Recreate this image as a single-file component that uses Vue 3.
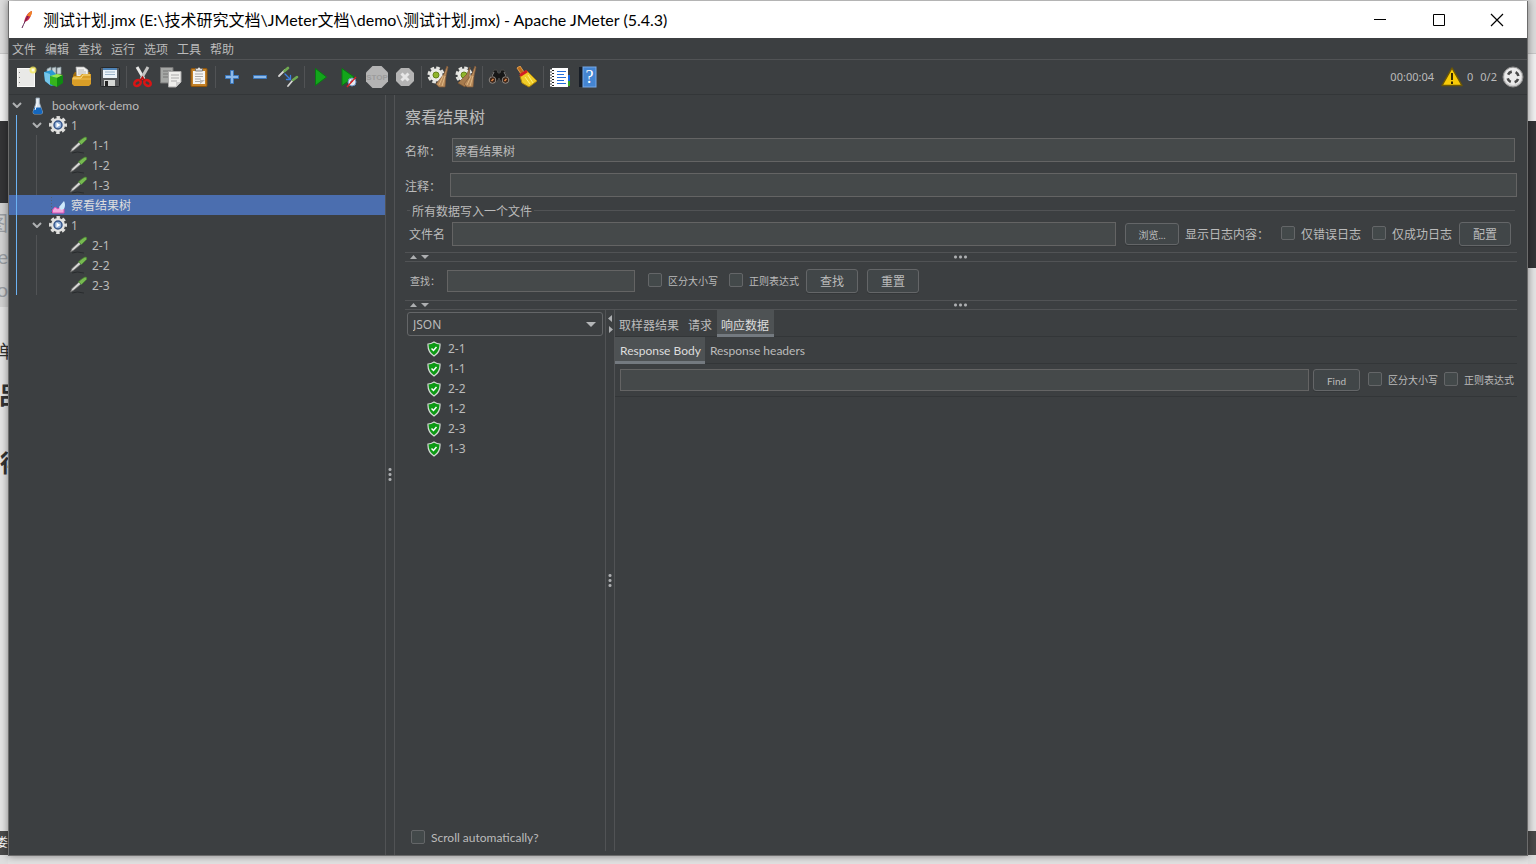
<script setup>
import { ref } from 'vue'

const title = '测试计划.jmx (E:\\技术研究文档\\JMeter文档\\demo\\测试计划.jmx) - Apache JMeter (5.4.3)'
const menus = ['文件', '编辑', '查找', '运行', '选项', '工具', '帮助']
const toolGroups = [
  ['new', 'templates', 'open', 'save'],
  ['cut', 'copy', 'paste'],
  ['plus', 'minus', 'toggle'],
  ['start', 'startnp', 'stop', 'shutdown'],
  ['clear', 'clearall'],
  ['search', 'broom'],
  ['functions', 'help'],
]
const treeGroups = [
  { name: '1', children: ['1-1', '1-2', '1-3'] },
  { name: '1', children: ['2-1', '2-2', '2-3'] },
]
const results = ['2-1', '1-1', '2-2', '1-2', '2-3', '1-3']
const elementName = ref('察看结果树')
const renderer = ref('JSON')
</script>

<template>
  <div class="desktop">
    <div class="behind behind-left" aria-hidden="true">
      <div class="band band-top"></div>
      <div class="band band-white"></div>
      <div class="band band-dark"></div>
      <div class="band band-list">
        <span class="peek grey p1">图</span>
        <span class="peek grey p2">ge</span>
        <span class="peek grey p3">o</span>
      </div>
      <div class="band band-page">
        <span class="peek p4">单</span>
        <span class="peek bold p5">吕</span>
        <span class="peek bold p6">得</span>
      </div>
      <div class="band band-task"><span class="peek p7">娄</span></div>
    </div>
    <div class="behind behind-right" aria-hidden="true">
      <div class="band band-top"></div>
      <div class="band band-white"></div>
      <div class="band band-dark tall"></div>
      <div class="band band-page"></div>
      <div class="band band-task"></div>
    </div>

    <main class="window">
      <header class="titlebar">
        <svg class="feather" viewBox="0 0 16 22" width="16" height="22">
          <path d="M13 2C9 3 6 8 5 13L8 12C11 10 12.500 6 13 2Z" fill="#c9234a" />
          <path d="M13 2C10.500 2.500 9 4.500 8 7L11.500 7.500C12.500 5.500 13 4 13 2Z" fill="#f08324" />
          <path d="M9 7C7 11 5 14 3 19" fill="none" stroke="#5c2150" stroke-width="1" />
        </svg>
        <h1>{{ title }}</h1>
        <div class="caption-buttons">
          <button aria-label="Minimize"><svg width="14" height="14" viewBox="0 0 14 14"><path d="M1 6.500H13" stroke="#000" /></svg></button>
          <button aria-label="Maximize"><svg width="14" height="14" viewBox="0 0 14 14"><path d="M1.500 1.500H12.500V12.500H1.500Z" fill="none" stroke="#000" /></svg></button>
          <button aria-label="Close"><svg width="14" height="14" viewBox="0 0 14 14"><path d="M1 1L13 13M13 1L1 13" stroke="#000" stroke-width="1.200" /></svg></button>
        </div>
      </header>

      <nav class="menubar">
        <button v-for="m in menus" :key="m">{{ m }}</button>
      </nav>

      <div class="toolbar">
        <div v-for="(group, gi) in toolGroups" :key="gi" class="tool-group">
          <button v-for="t in group" :key="t" :aria-label="t">
            <svg viewBox="0 0 22 22" width="22" height="22">
              <g v-if="t === 'new'">
                <rect x="2.500" y="2.500" width="17" height="18" fill="#e9e9e7" stroke="#fafaf8" />
                <path d="M4.500 6v1M4.500 11v1M4.500 16v1" stroke="#888" />
                <circle cx="18" cy="4" r="3.500" fill="#f4e95e" opacity=".8" />
                <circle cx="18" cy="4" r="1.500" fill="#fffde0" />
              </g>
              <g v-else-if="t === 'templates'">
                <path d="M4 3L8 1V8H4ZM9 2L13 1V8H9ZM14 2L18 1V8H14Z" fill="#c8d2d6" stroke="#7e9098" stroke-width=".7" />
                <path d="M1 6L9 4L13 8V19L8 20L2 15Z" fill="#2b9ad2" />
                <path d="M1 6L7 8V19L2 15Z" fill="#75c6ea" />
                <path d="M7 10L14 8L20 9L14 12Z" fill="#96e84c" />
                <path d="M7 10L14 12V21L7 18Z" fill="#36b51c" />
                <path d="M14 12L20 9V17L14 21Z" fill="#0f8911" />
              </g>
              <g v-else-if="t === 'open'">
                <path d="M2 9L4 6H19V19H2Z" fill="#9d6b0e" />
                <path d="M5 1H13L17 4V13H6Z" fill="#f2f2f0" stroke="#aaa" stroke-width=".7" />
                <path d="M7 4H13M7 6H15M7 8H15" stroke="#aaa" stroke-width=".8" />
                <path d="M1 12L3 10H9L11 8H20V18L18 20H3L1 18Z" fill="#d99e27" />
                <path d="M1.500 12.500H20V13.500H1.500Z" fill="#eebf55" />
                <path d="M2 12H10L12 9H19" fill="none" stroke="#fce087" />
              </g>
              <g v-else-if="t === 'save'">
                <rect x="1.500" y="1.500" width="19" height="19" rx="1" fill="#56585a" stroke="#27292b" />
                <rect x="4" y="2" width="14" height="10" fill="#edf3f8" />
                <path d="M4 3H18" stroke="#4e83b6" stroke-width="2" />
                <path d="M6 6H16M6 8.500H16" stroke="#9cb4c8" />
                <rect x="5" y="14" width="11" height="6" fill="#d5d7d5" />
                <rect x="6" y="15" width="3" height="5" fill="#222" />
              </g>
              <g v-else-if="t === 'cut'">
                <path d="M5 1L12 13" stroke="#e7e7e5" stroke-width="3" />
                <path d="M16 1L9 13" stroke="#c4c4c2" stroke-width="3" />
                <ellipse cx="5.500" cy="17" rx="3.500" ry="2.600" transform="rotate(-35 5.500 17)" fill="none" stroke="#d91515" stroke-width="2.500" />
                <ellipse cx="15.500" cy="17" rx="3.500" ry="2.600" transform="rotate(35 15.500 17)" fill="none" stroke="#d91515" stroke-width="2.500" />
                <path d="M8.500 14.500L10.500 11.500L12.500 14.500" fill="none" stroke="#ba1010" stroke-width="2" />
              </g>
              <g v-else-if="t === 'copy'">
                <path d="M.5 1.500H13V17H.5Z" fill="#a5a7a5" stroke="#777" />
                <path d="M3 5H11M3 8H11M3 11H11" stroke="#777" />
                <path d="M8.500 5.500H21V16L16 21H8.500Z" fill="#eeeeec" stroke="#aaa" />
                <path d="M11 9H19M11 12H19M11 15H17" stroke="#aaa" />
                <path d="M16 21V16H21Z" fill="#ccc" />
              </g>
              <g v-else-if="t === 'paste'">
                <rect x="3" y="2.500" width="16" height="18" rx="1" fill="#c38127" stroke="#8e540b" />
                <rect x="5" y="5" width="12" height="13" fill="#f5f5f3" />
                <path d="M7.500 5V2.500H9.500L11 1L12.500 2.500H14.500V5Z" fill="#ddd" stroke="#666" stroke-width=".8" />
                <path d="M7 8H15M7 10.500H15M7 13H13M7 15.500H12" stroke="#aaa" />
                <path d="M12 18V14H17Z" fill="#bbb" />
              </g>
              <path v-else-if="t === 'plus'" d="M9.500 4.500H12.500V9.500H17.500V12.500H12.500V17.500H9.500V12.500H4.500V9.500H9.500Z" fill="#8db9e8" stroke="#3b78bd" />
              <path v-else-if="t === 'minus'" d="M4.500 9.500H17.500V12.500H4.500Z" fill="#8db9e8" stroke="#3b78bd" />
              <g v-else-if="t === 'toggle'" stroke-linecap="round">
                <path d="M2 10L8 4M11 20L16 14" stroke="#d6d6d4" stroke-width="1.800" />
                <path d="M7.500 5L11 2M16 14L20 11" stroke="#70a951" stroke-width="2.600" />
                <path d="M8 8L13 13M13.500 9.500V13.500H9.500" stroke="#3d7fe0" stroke-width="1.300" fill="none" />
              </g>
              <path v-else-if="t === 'start'" d="M5.500 2.500L16.500 11L5.500 19.500Z" fill="#13a51b" stroke="#087a12" />
              <g v-else-if="t === 'startnp'">
                <path d="M4 2.500L16 11L4 19.500Z" fill="#13a51b" stroke="#087a12" />
                <circle cx="14" cy="16" r="4" fill="#e3e9f2" stroke="#6d91c0" />
                <path d="M14 13.500V16H12" stroke="#456" fill="none" />
                <path d="M9 21L18 11" stroke="#dd2222" stroke-width="1.300" />
              </g>
              <g v-else-if="t === 'stop'">
                <path d="M6.500 0H15.500L22 6.500V15.500L15.500 22H6.500L0 15.500V6.500Z" fill="#b4b4b4" />
                <text x="11" y="14" text-anchor="middle" class="stop-word">STOP</text>
              </g>
              <g v-else-if="t === 'shutdown'">
                <path d="M7 2H15L20 7V15L15 20H7L2 15V7Z" fill="#b4b4b4" />
                <path d="M7.500 7.500L14.500 14.500M14.500 7.500L7.500 14.500" stroke="#e6e6e6" stroke-width="3" />
              </g>
              <g v-else-if="t === 'clear' || t === 'clearall'">
                <circle cx="9" cy="9" r="6.500" fill="#ecece8" />
                <circle cx="9" cy="9" r="7.300" fill="none" stroke="#e3e3df" stroke-width="2.500" stroke-dasharray="3.700 2.030" />
                <circle cx="9" cy="9" r="3" fill="#90b52b" stroke="#64821b" />
                <path v-if="t === 'clearall'" d="M15 1L12 8L3 17L10 21L14 12Z" fill="#a77b4d" stroke="#7c5632" stroke-width=".7" />
                <path d="M20 0L17 8L9 18L12 21H18L19 10L21 1Z" fill="#b88b5b" stroke="#80593a" stroke-width=".7" />
                <path d="M16 10L12 19M18 10L15 20" stroke="#e1b985" stroke-width="1" />
              </g>
              <g v-else-if="t === 'search'">
                <path d="M6 4H9L10 7H12L13 4H16L19 9L21 14L13 16L11 12L9 16L1 14L3 9Z" fill="#171717" stroke="#4b4b49" />
                <path d="M6 6L4 10M16 6L18 10" stroke="#888" />
                <circle cx="4.500" cy="14" r="3.300" fill="#3c2417" stroke="#8f8a85" />
                <circle cx="17.500" cy="14" r="3.300" fill="#3c2417" stroke="#8f8a85" />
                <path d="M3.500 15L5.500 13M16.500 15L18.500 13" stroke="#de8648" stroke-width="1.500" />
              </g>
              <g v-else-if="t === 'broom'">
                <path d="M1 2L4 0L8 6L5 8Z" fill="#b86d1c" stroke="#df9b4d" />
                <path d="M4 10L11 5L21 15L13 21L6 17Z" fill="#f0cc27" stroke="#ae8409" />
                <path d="M9 11L14 18M12 9L17 17" stroke="#fff078" />
                <path d="M4 9.500L11 5" stroke="#d31e23" stroke-width="3" />
              </g>
              <g v-else-if="t === 'functions'">
                <path d="M18 9H21V15H18Z" fill="#1768e0" /><path d="M18 15H21V20H18Z" fill="#35a821" />
                <rect x="3" y="2" width="16" height="19" fill="#fff" />
                <path d="M8 5.500H17M8 8.500H15M8 11.500H17M8 14.500H15M8 17.500H17" stroke="#236edb" />
                <path d="M1 4.500H5M1 7.500H5M1 10.500H5M1 13.500H5M1 16.500H5M1 19.500H5" stroke="#fff" stroke-width="2" />
                <path d="M3 4.500H5M3 7.500H5M3 10.500H5M3 13.500H5M3 16.500H5M3 19.500H5" stroke="#222" />
              </g>
              <g v-else>
                <rect x="2" y="1" width="4" height="20" fill="#171d26" />
                <rect x="6" y="1" width="13" height="20" fill="#4485d2" stroke="#77a9e8" />
                <text x="12.500" y="17" text-anchor="middle" class="help-mark">?</text>
              </g>
            </svg>
          </button>
        </div>
        <div class="status">
          <span class="time">00:00:04</span>
          <svg class="warn" width="22" height="20" viewBox="0 0 22 20"><path d="M11 1L21 18.500H1Z" fill="#f8cb08" stroke="#6d5704" stroke-width="1.500" stroke-linejoin="round" /><path d="M11 6V13M11 14.500V17" stroke="#332900" stroke-width="2" /></svg>
          <span class="errors">0</span>
          <span class="threads">0/2</span>
          <svg width="22" height="22" viewBox="0 0 22 22"><circle cx="11" cy="11" r="10" fill="#cfcfcf" stroke="#8c8c8c" /><circle cx="11" cy="10.500" r="8.500" fill="#ececec" /><circle cx="11" cy="11" r="5.500" fill="none" stroke="#4a4a4a" stroke-width="2.600" stroke-dasharray="4.600 4.040" stroke-dashoffset="-2.100" /></svg>
        </div>
      </div>

      <div class="body">
        <aside class="plan">
          <ul class="tree">
            <li class="row root">
              <svg class="chev" width="10" height="6" viewBox="0 0 10 6"><path d="M1 1L5 5L9 1" /></svg>
              <svg width="16" height="20" viewBox="0 0 16 20"><path d="M6 3H9.500V8L12.500 17Q12.500 19 11 19H4.500Q3 19 3 17L6 8Z" fill="#d8e2ec" stroke="#99a9b8" stroke-width=".8" /><path d="M4.500 12.500H11L12.500 17Q12.500 19 11 19H4.500Q3 19 3 17Z" fill="#1567bd" /><path d="M7 4V9L5 15" stroke="#fff" fill="none" /></svg>
              <span class="root-name">bookwork-demo</span>
            </li>
            <li class="branches">
              <ul>
                <template v-for="(g, gi) in treeGroups" :key="gi">
                  <li v-if="gi === 1" class="row selected">
                    <svg width="16" height="18" viewBox="0 0 16 18"><path d="M1.500 1V17" stroke="#55606f" stroke-dasharray="1 2" /><path d="M2.500 17V14L5 11L8 13L11 10L14 13V17Z" fill="#f2a9df" stroke="#d94eb2" /><path d="M9 11L14 5Q16 9 14 13L11 14Z" fill="#cee9fb" /></svg>
                    <span>察看结果树</span>
                  </li>
                  <li>
                    <div class="row group">
                      <svg class="chev" width="10" height="6" viewBox="0 0 10 6"><path d="M1 1L5 5L9 1" /></svg>
                      <svg width="20" height="20" viewBox="0 0 20 20"><circle cx="10" cy="10" r="7.500" fill="none" stroke="#dededc" stroke-width="3" stroke-dasharray="3.400 2.490" stroke-dashoffset="1.700" /><circle cx="10" cy="10" r="6" fill="#e9e9e7" stroke="#e3e3e1" stroke-width="2" /><circle cx="10" cy="10" r="4" fill="#8faed7" stroke="#35558a" stroke-width="1.500" /><path d="M8.500 7.500L12.500 10L8.500 12.500Z" fill="#fff" /></svg>
                      <span>{{ g.name }}</span>
                    </div>
                    <ul class="leaves">
                      <li v-for="c in g.children" :key="c" class="row leaf">
                        <svg width="20" height="20" viewBox="0 0 20 20"><path d="M3 18Q8 16 15 18" stroke="#292c2e" fill="none" /><path d="M1.500 17L3 13.500L10 7L12 9L5 15Z" fill="#d6d6d4" stroke="#666" stroke-width=".7" /><path d="M9.500 7L12 4.500L16 2Q18.500 2 17.500 4.500L14 8L12.500 9.500Z" fill="#76b851" stroke="#478330" stroke-width=".7" /></svg>
                        <span>{{ c }}</span>
                      </li>
                    </ul>
                  </li>
                </template>
              </ul>
            </li>
          </ul>
        </aside>

        <div class="vsplit main-split"><i class="dots-v"></i></div>

        <section class="editor">
          <h2>察看结果树</h2>
          <div class="field name-field"><label for="name">名称：</label><input id="name" v-model="elementName" type="text"></div>
          <div class="field note-field"><label for="note">注释：</label><input id="note" type="text"></div>
          <fieldset class="file-set">
            <legend>所有数据写入一个文件</legend>
            <div class="file-row">
              <label for="file">文件名</label>
              <input id="file" type="text">
              <button class="btn small browse">浏览...</button>
              <span class="log-label">显示日志内容：</span>
              <label class="check"><input type="checkbox">仅错误日志</label>
              <label class="check"><input type="checkbox">仅成功日志</label>
              <button class="btn">配置</button>
            </div>
          </fieldset>

          <div class="hsplit"><svg width="20" height="5" viewBox="0 0 20 5"><path d="M1 5L4.500 1L8 5ZM12 1H20L16 5Z" /></svg><i class="dots-h"></i></div>

          <div class="search-row">
            <label for="find">查找：</label>
            <input id="find" type="text">
            <label class="check tiny"><input type="checkbox">区分大小写</label>
            <label class="check tiny"><input type="checkbox">正则表达式</label>
            <button class="btn">查找</button>
            <button class="btn">重置</button>
          </div>

          <div class="hsplit"><svg width="20" height="5" viewBox="0 0 20 5"><path d="M1 5L4.500 1L8 5ZM12 1H20L16 5Z" /></svg><i class="dots-h"></i></div>

          <div class="results">
            <div class="samples">
              <div class="combo">
                <select v-model="renderer" aria-label="Renderer"><option>JSON</option></select>
                <svg width="10" height="5" viewBox="0 0 10 5"><path d="M0 0H10L5 5Z" fill="#b4b6b8" /></svg>
              </div>
              <ul class="sample-list">
                <li v-for="r in results" :key="r">
                  <svg width="14" height="16" viewBox="0 0 14 16"><path d="M7 1Q10 3 13 3Q13.500 11 7 15Q.5 11 1 3Q4 3 7 1Z" fill="#0c9a14" stroke="#d3dad3" stroke-width="1.200" /><path d="M4.500 7.500L6.500 9.500L9.500 6" fill="none" stroke="#fff" stroke-width="1.500" /></svg>
                  <span>{{ r }}</span>
                </li>
              </ul>
              <label class="check scroll"><input type="checkbox">Scroll automatically?</label>
            </div>
            <div class="vsplit inner-split">
              <svg width="5" height="18" viewBox="0 0 5 18"><path d="M4 0V7L0 3.500ZM1 11V18L5 14.500Z" /></svg>
              <i class="dots-v"></i>
            </div>
            <div class="detail">
              <div class="tabs main-tabs">
                <button>取样器结果</button><button>请求</button><button class="active">响应数据</button>
              </div>
              <div class="tabs sub-tabs">
                <button class="active">Response Body</button><button>Response headers</button>
              </div>
              <div class="find-row">
                <input type="text" aria-label="Find text">
                <button class="btn small find">Find</button>
                <label class="check tiny"><input type="checkbox">区分大小写</label>
                <label class="check tiny"><input type="checkbox">正则表达式</label>
              </div>
            </div>
          </div>
        </section>
      </div>
    </main>
  </div>
</template>

<style>
html, body { height: 100%; overflow: hidden; }
#app { height: 100%; }
</style>

<style scoped>
* { box-sizing: border-box; }
.desktop {
  position: relative;
  height: 100vh;
  padding: 1px 8px 8px 8px;
  background: #e2e2e2;
  font: 12px/20px Lato, "Noto Sans CJK SC", sans-serif;
  color: #bbb;
  overflow: hidden;
}
button, input, select { font: inherit; color: inherit; margin: 0; }
button { border: 0; background: none; padding: 0; }
ul { list-style: none; margin: 0; padding: 0; }
svg { display: block; flex: none; }

.behind { position: absolute; top: 0; bottom: 0; width: 8px; display: flex; flex-direction: column; overflow: hidden; }
.behind-left { left: 0; }
.behind-right { right: 0; }
.band { position: relative; flex: none; overflow: hidden; }
.band-top { height: 54px; background: #dcdcdc; border-bottom: 1px solid #c8c8c8; }
.band-white { height: 67px; background: #f1f1f1; }
.band-dark { height: 82px; background: #343436; }
.band-dark.tall { height: 147px; }
.band-list { height: 104px; background: #d2d2d2; }
.band-page { flex: 1; background: #e5e5e5; }
.band-task { height: 33px; background: linear-gradient(#4a4a4a 24px, #dedede 24px); color: #fff; }
.peek { position: absolute; right: 0; white-space: nowrap; font-size: 20px; line-height: 24px; color: #333; }
.grey { color: #9a9ea3; }
.bold { font-size: 24px; font-weight: 700; }
.p1 { top: 8px; }
.p2 { top: 41px; }
.p3 { top: 74px; }
.p4 { top: 32px; left: -2px; font-size: 18px; }
.p5 { top: 76px; left: -2px; }
.p6 { top: 144px; left: 0; }
.p7 { top: 0; font-size: 12px; color: #fff; }

.window {
  position: relative;
  height: 100%;
  display: flex;
  flex-direction: column;
  background: #3c3f41;
  border: 1px solid #6c6c6c;
  border-top: 0;
  box-shadow: 0 0 8px rgba(0, 0, 0, .45);
}
.titlebar { height: 37px; flex: none; display: flex; align-items: center; background: #fff; color: #000; padding-left: 10px; }
.titlebar h1 { flex: 1; margin: 0 0 0 8px; font-size: 16px; font-weight: 400; line-height: 20px; white-space: nowrap; }
.caption-buttons { display: flex; padding-right: 1px; }
.caption-buttons button { width: 58px; height: 36px; display: flex; align-items: center; justify-content: center; }
.caption-buttons button:first-child { margin-right: 1px; }
.caption-buttons button { margin-left: 0; }
.menubar { height: 22px; flex: none; display: flex; gap: 9px; padding: 2px 3px 0; border-bottom: 1px solid #515355; }
.menubar button { line-height: 20px; }

.toolbar { height: 35px; flex: none; display: flex; align-items: center; padding-left: 1px; border-bottom: 1px solid #333638; }
.tool-group { display: flex; gap: 6px; padding: 0 5px; }
.tool-group + .tool-group { border-left: 1px solid #515355; }
.stop-word { font: 700 8px "Liberation Sans", sans-serif; fill: #9c9c9c; }
.help-mark { font: 18px "Liberation Serif", serif; fill: #fff; }
.status { margin-left: auto; display: flex; align-items: center; padding-right: 3px; font-family: "Noto Sans", sans-serif; font-size: 11px; }
.time { margin-right: 7px; }
.errors { margin: 0 7px 0 4px; }
.threads { margin-right: 5px; }

.body { flex: 1; min-height: 0; display: flex; }
.plan { width: 376px; flex: none; }
.row { height: 20px; display: flex; align-items: center; }
.row span { padding-top: 2px; }
.chev path { fill: none; stroke: #afb1b3; stroke-width: 2; }
.root { padding-left: 3px; }
.root .chev { margin-right: 8px; }
.root-name { margin-left: 6px; }
.branches { position: relative; }
.branches::before { content: ""; position: absolute; left: 7px; top: 0; bottom: 0; width: 1px; background: #6cb3f5; }
.group { padding-left: 23px; }
.group .chev { margin-right: 6px; }
.group span, .leaf span { margin-left: 3px; font-family: "Noto Sans", sans-serif; }
.leaves { position: relative; }
.leaves::before { content: ""; position: absolute; left: 27px; top: 0; bottom: 0; width: 1px; background: #515355; }
.leaf { padding-left: 60px; }
.selected { background: #4b6eaf; color: #ddd; padding-left: 41px; }
.selected span { margin-left: 5px; }

.vsplit { width: 10px; flex: none; border: solid #515355; border-width: 0 1px; position: relative; }
.dots-v { position: absolute; left: 2px; top: 50%; width: 4px; height: 14px; margin-top: -8px; background: radial-gradient(circle, #adafb1 0 1px, transparent 2px) 0 0 / 4px 5px; }
.inner-split svg { margin: 5px auto 0; fill: #adafb1; }

.editor { flex: 1; min-width: 0; display: flex; flex-direction: column; padding: 0 10px 4px 10px; }
h2 { margin: 10px 0; font-size: 16px; line-height: 23px; font-weight: 400; }
input[type="text"] { height: 24px; min-width: 0; border: 1px solid #646464; background: #45494a; padding: 0 2px; outline: 0; }
.field { display: flex; align-items: center; }
.field label { flex: none; padding-top: 4px; }
.field input { flex: 1; }
.name-field label { width: 47px; }
.name-field { margin: 0 2px 11px 0; }
.note-field label { width: 45px; }
.file-set { margin: 1px 2px 0 2px; border: 0 solid #515355; border-top-width: 1px; padding: 0; min-width: 0; }
.file-set legend { margin-left: 3px; padding: 4px 2px 0; line-height: 20px; }
.file-row { display: flex; align-items: center; padding: 0 4px 6px 2px; }
.file-row > label:first-child { width: 43px; flex: none; padding-top: 2px; }
.file-row > input { flex: 1; }
.btn { height: 24px; width: 52px; flex: none; border: 1px solid #646668; border-radius: 3px; background: #414648; box-shadow: 0 1px 0 #343739; padding-top: 2px; }
.btn.small { height: 22px; font-size: 10px; line-height: 18px; }
.browse { width: 54px; margin: 0 6px 0 9px; }
.log-label { width: 96px; flex: none; padding-top: 2px; }
.check { display: flex; align-items: center; flex: none; white-space: nowrap; }
.check input { appearance: none; width: 14px; height: 14px; margin: 0 6px 2px 0; border: 1px solid #646668; border-radius: 2px; background: #43494a; }
.file-row .check { margin-right: 8px; padding-top: 2px; }
.file-row .check input { margin-bottom: 4px; }
.file-row .check + .check { margin: 0 7px 0 3px; }
.hsplit { height: 10px; flex: none; border: solid #515355; border-width: 1px 0; position: relative; }
.hsplit svg { margin: 1px 0 0 4px; fill: #adafb1; }
.dots-h { position: absolute; left: 50%; top: 2px; width: 15px; height: 4px; margin-left: -8px; background: radial-gradient(circle, #adafb1 0 1px, transparent 2px) 0 0 / 5px 4px; }
.search-row { height: 38px; display: flex; align-items: center; padding-left: 5px; }
.search-row > label:first-child { width: 37px; font-size: 10px; }
.search-row > input { width: 188px; height: 22px; margin-right: 13px; }
.tiny { font-size: 10px; }
.search-row .tiny { margin-right: 11px; }
.search-row .tiny + .tiny { margin-right: 7px; }
.search-row .btn + .btn { margin-left: 9px; }

.results { flex: 1; min-height: 0; display: flex; }
.samples { width: 200px; flex: none; display: flex; flex-direction: column; padding: 2px 2px 3px; }
.combo { position: relative; flex: none; height: 24px; }
.combo select { appearance: none; width: 100%; height: 24px; border: 1px solid #646668; border-radius: 3px; background: transparent; padding: 1px 5px 0; font-family: "Noto Sans", sans-serif; }
.combo svg { position: absolute; right: 7px; top: 10px; }
.sample-list { padding: 3px 0 0 20px; flex: 1; font-family: "Noto Sans", sans-serif; }
.sample-list li { height: 20px; display: flex; align-items: center; gap: 7px; }
.scroll { margin-left: 4px; }
.detail { flex: 1; min-width: 0; }
.tabs { height: 27px; display: flex; border-bottom: 1px solid #333638; }
.tabs button { padding: 0 4px 0 5px; height: 27px; line-height: 27px; }
.main-tabs button { padding: 2px 5px 0 4px; }
.tabs .active { background: #4e5254; color: #ddd; box-shadow: inset 0 -3px #747a80; }
.find-row { display: flex; align-items: center; height: 33px; padding: 0 3px 0 5px; border-bottom: 1px solid #333638; }
.find-row > input { flex: 1; height: 22px; }
.find { width: 47px; margin: 0 8px 0 4px; }
.find-row .tiny + .tiny { margin-left: 6px; }
</style>
